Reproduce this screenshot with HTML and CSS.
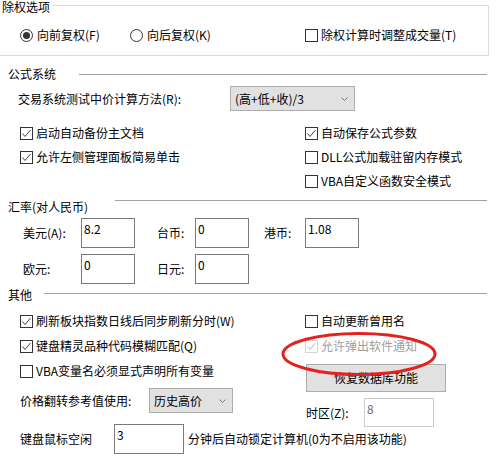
FILE: index.html
```html
<!DOCTYPE html>
<html lang="zh-CN">
<head>
  <meta charset="UTF-8">
  <title>选项</title>
  <link rel="stylesheet" href="styles.css">
</head>
<body>
<div class="dialog">

  <div class="group-top">
    <div class="group-top-title">除权选项</div>
    <div class="row row-radio">
      <label class="opt"><span class="radio on"></span>向前复权(F)</label>
      <label class="opt"><span class="radio"></span>向后复权(K)</label>
      <label class="opt opt-cb"><span class="box"></span>除权计算时调整成交量(T)</label>
    </div>
  </div>

  <div class="hdr hdr-formula"><span class="hdr-title">公式系统</span><span class="hline"></span></div>

  <div class="row row-method">
    <span class="method-label">交易系统测试中价计算方法(R):</span>
    <div class="select select-method"><span>(高+低+收)/3</span><svg class="chev" width="7" height="4" viewBox="0 0 7 4"><polyline points="0.5,0.5 3.5,3.5 6.5,0.5" fill="none" stroke="#7a7a7a" stroke-width="1"/></svg></div>
  </div>

  <div class="row two-col r-first">
    <label class="opt opt-cb"><span class="box"><svg width="11" height="11" viewBox="0 0 11 11"><polyline points="1.5,5.5 4,8.5 9.5,2" fill="none" stroke="#444" stroke-width="1"/></svg></span>启动自动备份主文档</label>
    <label class="opt opt-cb"><span class="box"><svg width="11" height="11" viewBox="0 0 11 11"><polyline points="1.5,5.5 4,8.5 9.5,2" fill="none" stroke="#444" stroke-width="1"/></svg></span>自动保存公式参数</label>
  </div>
  <div class="row two-col r-next">
    <label class="opt opt-cb"><span class="box"><svg width="11" height="11" viewBox="0 0 11 11"><polyline points="1.5,5.5 4,8.5 9.5,2" fill="none" stroke="#444" stroke-width="1"/></svg></span>允许左侧管理面板简易单击</label>
    <label class="opt opt-cb"><span class="box"></span>DLL公式加载驻留内存模式</label>
  </div>
  <div class="row two-col r-next">
    <span></span>
    <label class="opt opt-cb"><span class="box"></span>VBA自定义函数安全模式</label>
  </div>

  <div class="hdr hdr-rate"><span class="hdr-title">汇率(对人民币)</span><span class="hline"></span></div>

  <div class="rates rates-a">
    <span>美元(A):</span><div class="field">8.2</div>
    <span class="rate-gap">台币:</span><div class="field">0</div>
    <span class="rate-gap2">港币:</span><div class="field">1.08</div>
  </div>
  <div class="rates rates-b">
    <span>欧元:</span><div class="field">0</div>
    <span class="rate-gap">日元:</span><div class="field">0</div>
  </div>

  <div class="hdr hdr-other"><span class="hdr-title">其他</span><span class="hline"></span></div>

  <div class="other">
    <div class="col col-left">
      <label class="opt opt-cb"><span class="box"><svg width="11" height="11" viewBox="0 0 11 11"><polyline points="1.5,5.5 4,8.5 9.5,2" fill="none" stroke="#444" stroke-width="1"/></svg></span>刷新板块指数日线后同步刷新分时(W)</label>
      <label class="opt opt-cb"><span class="box"><svg width="11" height="11" viewBox="0 0 11 11"><polyline points="1.5,5.5 4,8.5 9.5,2" fill="none" stroke="#444" stroke-width="1"/></svg></span>键盘精灵品种代码模糊匹配(Q)</label>
      <label class="opt opt-cb"><span class="box"></span>VBA变量名必须显式声明所有变量</label>
      <div class="price-row">
        <span class="price-label">价格翻转参考值使用:</span>
        <div class="select select-price"><span>历史高价</span><svg class="chev" width="7" height="4" viewBox="0 0 7 4"><polyline points="0.5,0.5 3.5,3.5 6.5,0.5" fill="none" stroke="#7a7a7a" stroke-width="1"/></svg></div>
      </div>
    </div>
    <div class="col col-right">
      <label class="opt opt-cb"><span class="box"></span>自动更新曾用名</label>
      <label class="opt opt-cb disabled"><span class="box"><svg width="11" height="11" viewBox="0 0 11 11"><polyline points="1.5,5.5 4,8.5 9.5,2" fill="none" stroke="#b5b5b5" stroke-width="1"/></svg></span>允许弹出软件通知</label>
      <div class="btn">恢复数据库功能</div>
      <div class="tz-row">
        <span class="tz-label">时区(Z):</span>
        <div class="field field-off">8</div>
      </div>
    </div>
  </div>

  <div class="idle-row">
    <span class="idle-label">键盘鼠标空闲</span>
    <div class="field field-idle">3</div>
    <span class="idle-text">分钟后自动锁定计算机(0为不启用该功能)</span>
  </div>

  <svg class="mark" width="158" height="46" viewBox="0 0 158 46">
    <ellipse cx="79" cy="23" rx="76" ry="20.5" fill="none" stroke="#e3211f" stroke-width="3"/>
  </svg>
</div>
</body>
</html>
```

FILE: styles.css
```css
* {
  box-sizing: border-box;
}
html, body {
  margin: 0;
  background: #fff;
}
body {
  font: 12px/16px "Noto Sans CJK SC", "Microsoft YaHei", sans-serif;
  color: #000;
  width: 498px;
  height: 468px;
  overflow: hidden;
}
.dialog {
  position: relative;
  height: 468px;
}

/* top group box */
.group-top {
  margin-top: 5px;
  width: 489px;
  height: 51px;
  border: 1px solid #dcdcdc;
  border-left: 0;
}
.group-top-title {
  margin-top: -6px;
  padding-left: 2px;
  padding-right: 2px;
  width: max-content;
  background: #fff;
  line-height: 14px;
}
.row {
  display: flex;
  align-items: center;
  height: 16px;
}
.row-radio {
  display: grid;
  grid-template-columns: 110px 175px auto;
  padding-left: 20px;
  margin-top: 13px;
}
.opt {
  display: flex;
  align-items: center;
  gap: 4px;
  white-space: nowrap;
}
.opt-cb {
  gap: 3px;
}
.radio {
  width: 13px;
  height: 13px;
  border: 1px solid #333;
  border-radius: 50%;
  display: inline-flex;
  align-items: center;
  justify-content: center;
}
.radio.on::after {
  content: "";
  width: 7px;
  height: 7px;
  border-radius: 50%;
  background: #333;
}
.box {
  width: 13px;
  height: 13px;
  border: 1px solid #333;
  background: #fff;
  display: inline-flex;
  align-items: center;
  justify-content: center;
  flex: none;
}
.box svg {
  display: block;
}
.disabled {
  color: #a0a0a0;
}
.disabled .box {
  border-color: #d4d4d4;
}

/* section headers */
.hdr {
  display: flex;
  height: 16px;
  width: 487px;
  padding-left: 8px;
}
.hdr-title {
  flex: none;
}
.hline {
  flex: 1;
  height: 1px;
  background: #a0a0a0;
}
.hdr-formula {
  margin-top: 10px;
}
.hdr-formula .hdr-title {
  width: 71px;
}
.hdr-formula .hline {
  margin-top: 8px;
}
.hdr-rate {
  margin-top: 10px;
}
.hdr-rate .hdr-title {
  width: 107px;
}
.hdr-rate .hline {
  margin-top: 1px;
}
.hdr-other {
  margin-top: 3px;
}
.hdr-other .hdr-title {
  width: 36px;
}
.hdr-other .hline {
  margin-top: 6px;
}

/* formula */
.row-method {
  height: 25px;
  margin-top: 4px;
  padding-left: 18px;
}
.method-label {
  width: 212px;
}
.select {
  display: flex;
  align-items: center;
  justify-content: space-between;
  height: 25px;
  padding: 0 6px 0 4px;
  background: #e1e1e1;
  border: 1px solid #adadad;
}
.select-method {
  width: 125px;
}
.chev {
  display: block;
}
.two-col {
  display: grid;
  grid-template-columns: 285px auto;
  padding-left: 20px;
}
.r-first {
  margin-top: 14px;
}
.r-next {
  margin-top: 8px;
}

/* rates */
.rates {
  display: flex;
  align-items: center;
  height: 30px;
  padding-left: 23px;
}
.rates-a {
  margin-top: 3px;
}
.rates-b {
  margin-top: 6px;
}
.rates > span {
  width: 58px;
}
.rates > .rate-gap {
  margin-left: 22px;
  width: 38px;
}
.rates > .rate-gap2 {
  margin-left: 15px;
  width: 41px;
}
.field {
  width: 54px;
  height: 30px;
  border: 1px solid #7a7a7a;
  padding: 2px 2px 0;
  background: #fff;
}
.field-off {
  width: 70px;
  height: 29px;
  border-color: #ccc;
  color: #6d6d6d;
}

/* other */
.other {
  display: grid;
  grid-template-columns: 285px auto;
  padding-left: 20px;
  padding-top: 10px;
  height: 121px;
}
.col {
  display: flex;
  flex-direction: column;
  align-items: flex-start;
}
.col-left {
  gap: 9px;
}
.col-left .opt,
.col-right .opt {
  height: 16px;
}
.col-right .opt + .opt {
  margin-top: 9px;
}
.price-row {
  display: flex;
  align-items: center;
  height: 25px;
}
.price-label {
  width: 129px;
}
.select-price {
  width: 84px;
}
.btn {
  margin-top: 10px;
  margin-left: 1px;
  width: 140px;
  height: 28px;
  background: #e1e1e1;
  border: 1px solid #adadad;
  display: flex;
  align-items: center;
  justify-content: center;
}
.tz-row {
  display: flex;
  align-items: center;
  margin-top: 6px;
  margin-left: 1px;
}
.tz-label {
  width: 58px;
}
.idle-row {
  display: flex;
  align-items: center;
  height: 30px;
  padding-left: 20px;
}
.idle-label {
  width: 94px;
}
.field-idle {
  width: 70px;
}
.idle-text {
  margin-left: 4px;
}

.mark {
  position: absolute;
  left: 280px;
  top: 326px;
}
```
